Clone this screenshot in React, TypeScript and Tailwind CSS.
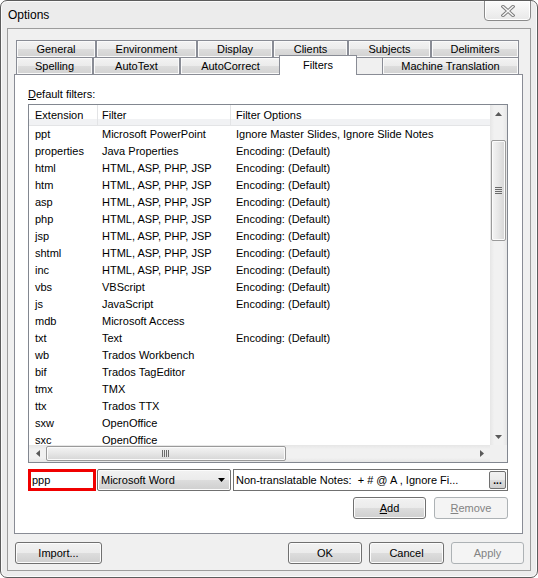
import React from "react";

const rows: [string, string, string][] = [
  ["ppt", "Microsoft PowerPoint", "Ignore Master Slides, Ignore Slide Notes"],
  ["properties", "Java Properties", "Encoding: (Default)"],
  ["html", "HTML, ASP, PHP, JSP", "Encoding: (Default)"],
  ["htm", "HTML, ASP, PHP, JSP", "Encoding: (Default)"],
  ["asp", "HTML, ASP, PHP, JSP", "Encoding: (Default)"],
  ["php", "HTML, ASP, PHP, JSP", "Encoding: (Default)"],
  ["jsp", "HTML, ASP, PHP, JSP", "Encoding: (Default)"],
  ["shtml", "HTML, ASP, PHP, JSP", "Encoding: (Default)"],
  ["inc", "HTML, ASP, PHP, JSP", "Encoding: (Default)"],
  ["vbs", "VBScript", "Encoding: (Default)"],
  ["js", "JavaScript", "Encoding: (Default)"],
  ["mdb", "Microsoft Access", ""],
  ["txt", "Text", "Encoding: (Default)"],
  ["wb", "Trados Workbench", ""],
  ["bif", "Trados TagEditor", ""],
  ["tmx", "TMX", ""],
  ["ttx", "Trados TTX", ""],
  ["sxw", "OpenOffice", ""],
  ["sxc", "OpenOffice", ""],
];

const btnOn =
  "flex items-center justify-center rounded-[3px] border border-[#707070] h-[22px] bg-[linear-gradient(to_bottom,#f2f2f2_0%,#ebebeb_50%,#dddddd_50%,#cfcfcf_100%)] shadow-[inset_0_0_0_1px_#fcfcfc] text-black";
const btnOff =
  "flex items-center justify-center rounded-[3px] border border-[#adb2b5] h-[22px] bg-[#f4f4f4] text-[#838383]";

const tabCls =
  "h-[17px] flex items-center justify-center border-t border-l border-r border-[#898c95] bg-[linear-gradient(to_bottom,#f3f3f3_0%,#ebebeb_50%,#dddddd_50%,#d2d2d2_100%)] shadow-[inset_0_0_0_1px_#fafafa] leading-none";

function TriUp() {
  return (
    <svg width="7" height="4" viewBox="0 0 7 4">
      <path d="M0 4 L3.5 0 L7 4 Z" fill="#5a5a5a" />
    </svg>
  );
}
function TriDown({ c = "#5a5a5a" }: { c?: string }) {
  return (
    <svg width="7" height="4" viewBox="0 0 7 4">
      <path d="M0 0 L3.5 4 L7 0 Z" fill={c} />
    </svg>
  );
}
function TriLeft() {
  return (
    <svg width="4" height="7" viewBox="0 0 4 7">
      <path d="M4 0 L0 3.5 L4 7 Z" fill="#5a5a5a" />
    </svg>
  );
}
function TriRight() {
  return (
    <svg width="4" height="7" viewBox="0 0 4 7">
      <path d="M0 0 L4 3.5 L0 7 Z" fill="#5a5a5a" />
    </svg>
  );
}

export default function App() {
  return (
    <div className="w-[538px] h-[578px] flex flex-col bg-[#ececec] border border-[#5c5c5c] rounded-[7px] overflow-hidden font-['Liberation_Sans',Arial,sans-serif] text-[11px] text-black shadow-[inset_0_0_0_1px_#fbfbfb]">
      {/* Title bar */}
      <div className="h-[27px] flex justify-between items-start shrink-0">
        <div className="pl-[7px] pt-[7px] text-[12px] leading-[14px]">Options</div>
        <div className="-mt-px mr-[6px] w-[47px] h-[21px] rounded-b-[4px] border border-[#8a8a8a] bg-[linear-gradient(to_bottom,#fbfbfb,#e8e8e8)] shadow-[inset_0_0_0_1px_#ffffff] flex items-center justify-center">
          <svg width="14" height="12" viewBox="0 0 14 12">
            <path d="M2 1.5 L12 10.5 M12 1.5 L2 10.5" stroke="#7c7c7c" strokeWidth="3.4" strokeLinecap="square" />
            <path d="M2 1.5 L12 10.5 M12 1.5 L2 10.5" stroke="#f6f6f6" strokeWidth="1.4" strokeLinecap="square" />
          </svg>
        </div>
      </div>

      {/* Client area */}
      <div className="ml-[6px] w-[524px] h-[543px] border border-[#9c9c9c] bg-[#f0f0f0] pl-[6px] pr-[7px] flex flex-col">
        {/* Tabs */}
        <div className="mt-[11px] ml-[2px] flex flex-col">
          <div className="flex">
            <div className={`${tabCls} w-[80px]`}>General</div>
            <div className={`${tabCls} w-[101px]`}>Environment</div>
            <div className={`${tabCls} w-[76px]`}>Display</div>
            <div className={`${tabCls} w-[75px]`}>Clients</div>
            <div className={`${tabCls} w-[83px]`}>Subjects</div>
            <div className={`${tabCls} w-[88px]`}>Delimiters</div>
          </div>
          <div className="flex items-start h-[17px]">
            <div className={`${tabCls} w-[77px]`}>Spelling</div>
            <div className={`${tabCls} w-[87px]`}>AutoText</div>
            <div className={`${tabCls} w-[101px]`}>AutoCorrect</div>
            <div className="relative z-10 -mt-[2px] -mx-[2px] w-[78px] h-[20px] border-t border-l border-r border-[#898c95] bg-[#ffffff] flex items-start justify-center pt-[3px] leading-[12px]">
              Filters
            </div>
            <div className="w-[27px] h-[17px] border-t border-[#898c95]"></div>
            <div className={`${tabCls} w-[137px]`}>Machine Translation</div>
          </div>
        </div>

        {/* Panel */}
        <div className="h-[460px] w-[509px] border border-[#898c95] bg-[#ffffff] pl-[13px] pr-[14px] flex flex-col">
          <div className="mt-[13px] h-[13px] leading-[13px]">
            <span className="underline">D</span>efault filters:
          </div>

          {/* List */}
          <div className="mt-[3px] w-[480px] h-[359px] border border-[#828790] bg-white flex flex-col">
            <div className="flex h-[340px]">
              <div className="w-[461px] h-[340px] overflow-hidden">
                <div className="flex h-[21px] bg-[linear-gradient(to_bottom,#ffffff_0%,#ffffff_70%,#f1f2f4_70%,#f1f2f4_100%)] border-b border-[#e3e4e6] items-center">
                  <div className="w-[69px] h-full flex items-center pl-[6px] pt-[1px] border-r border-[#e3e4e6]">Extension</div>
                  <div className="w-[133px] h-full flex items-center pl-[4px] pt-[1px] border-r border-[#e3e4e6]">Filter</div>
                  <div className="flex-1 h-full flex items-center pl-[5px] pt-[1px]">Filter Options</div>
                </div>
                {rows.map((r, i) => (
                  <div key={i} className="flex h-[17px] items-center whitespace-nowrap">
                    <div className="w-[69px] pl-[6px] overflow-hidden">{r[0]}</div>
                    <div className="w-[133px] pl-[4px] overflow-hidden">{r[1]}</div>
                    <div className="flex-1 pl-[5px] overflow-hidden">{r[2]}</div>
                  </div>
                ))}
              </div>
              {/* vertical scrollbar */}
              <div className="w-[17px] h-[340px] flex flex-col items-center bg-[linear-gradient(to_right,#e6e6e6,#f1f1f1_25%,#f1f1f1_75%,#e6e6e6)]">
                <div className="h-[17px] w-full flex items-center justify-center"><TriUp /></div>
                <div className="mt-[18px] w-[15px] h-[101px] rounded-[2px] border border-[#9a9a9a] bg-[linear-gradient(to_right,#f4f4f4,#e6e6e6_50%,#d6d6d6)] shadow-[inset_0_0_0_1px_#fbfbfb] flex items-center justify-center">
                  <svg width="7" height="8" viewBox="0 0 7 8">
                    <path d="M0 0.5 H7 M0 2.5 H7 M0 4.5 H7 M0 6.5 H7" stroke="#6a6a6a" strokeWidth="1" />
                  </svg>
                </div>
                <div className="flex-1"></div>
                <div className="h-[17px] w-full flex items-center justify-center"><TriDown /></div>
              </div>
            </div>
            <div className="flex h-[17px]">
              {/* horizontal scrollbar */}
              <div className="w-[461px] h-[17px] flex items-center bg-[linear-gradient(to_bottom,#e6e6e6,#f1f1f1_25%,#f1f1f1_75%,#e6e6e6)]">
                <div className="w-[17px] h-full flex items-center justify-center"><TriLeft /></div>
                <div className="w-[240px] h-[15px] rounded-[2px] border border-[#9a9a9a] bg-[linear-gradient(to_bottom,#f4f4f4,#e6e6e6_50%,#d6d6d6)] shadow-[inset_0_0_0_1px_#fbfbfb] flex items-center justify-center">
                  <svg width="8" height="7" viewBox="0 0 8 7">
                    <path d="M0.5 0 V7 M2.5 0 V7 M4.5 0 V7 M6.5 0 V7" stroke="#6a6a6a" strokeWidth="1" />
                  </svg>
                </div>
                <div className="flex-1"></div>
                <div className="w-[17px] h-full flex items-center justify-center"><TriRight /></div>
              </div>
              <div className="w-[17px] h-[17px] bg-[#f0f0f0]"></div>
            </div>
          </div>

          {/* Edit row */}
          <div className="mt-[6px] h-[22px] flex">
            <div className="w-[68px] h-[22px] border-[3px] border-[#f00000] bg-white flex items-center pl-[1px]">ppp</div>
            <div className="w-[1px]"></div>
            <div className={`${btnOn} w-[134px] !justify-between pl-[3px] pr-[5px] !rounded-[2px]`}>
              <span>Microsoft Word</span>
              <TriDown c="#000000" />
            </div>
            <div className="w-[2px]"></div>
            <div className="w-[275px] h-[22px] border border-[#707070] bg-white flex items-center justify-between pl-[2px] pr-[1px]">
              <span className="whitespace-pre">Non-translatable Notes:  + # @ A , Ignore Fi...</span>
              <div className="w-[17px] h-[18px] rounded-[2px] border border-[#707070] bg-[linear-gradient(to_bottom,#f2f2f2_0%,#ebebeb_50%,#dddddd_50%,#cfcfcf_100%)] flex items-end justify-center leading-[10px] pb-[2px] text-[10px] font-bold">
                ...
              </div>
            </div>
          </div>

          {/* Add / Remove */}
          <div className="mt-[6px] flex justify-end gap-[8px]">
            <div className={`${btnOn} w-[73px]`}>
              <span><span className="underline">A</span>dd</span>
            </div>
            <div className={`${btnOff} w-[74px]`}>
              <span><span className="underline">R</span>emove</span>
            </div>
          </div>
        </div>

        {/* Bottom buttons */}
        <div className="mt-[8px] flex justify-between">
          <div className={`${btnOn} w-[87px] ml-[1px]`}>Import...</div>
          <div className="flex gap-[7px] -mr-px">
            <div className={`${btnOn} w-[74px]`}>OK</div>
            <div className={`${btnOn} w-[75px]`}>Cancel</div>
            <div className={`${btnOff} w-[73px]`}>Apply</div>
          </div>
        </div>
      </div>
    </div>
  );
}
